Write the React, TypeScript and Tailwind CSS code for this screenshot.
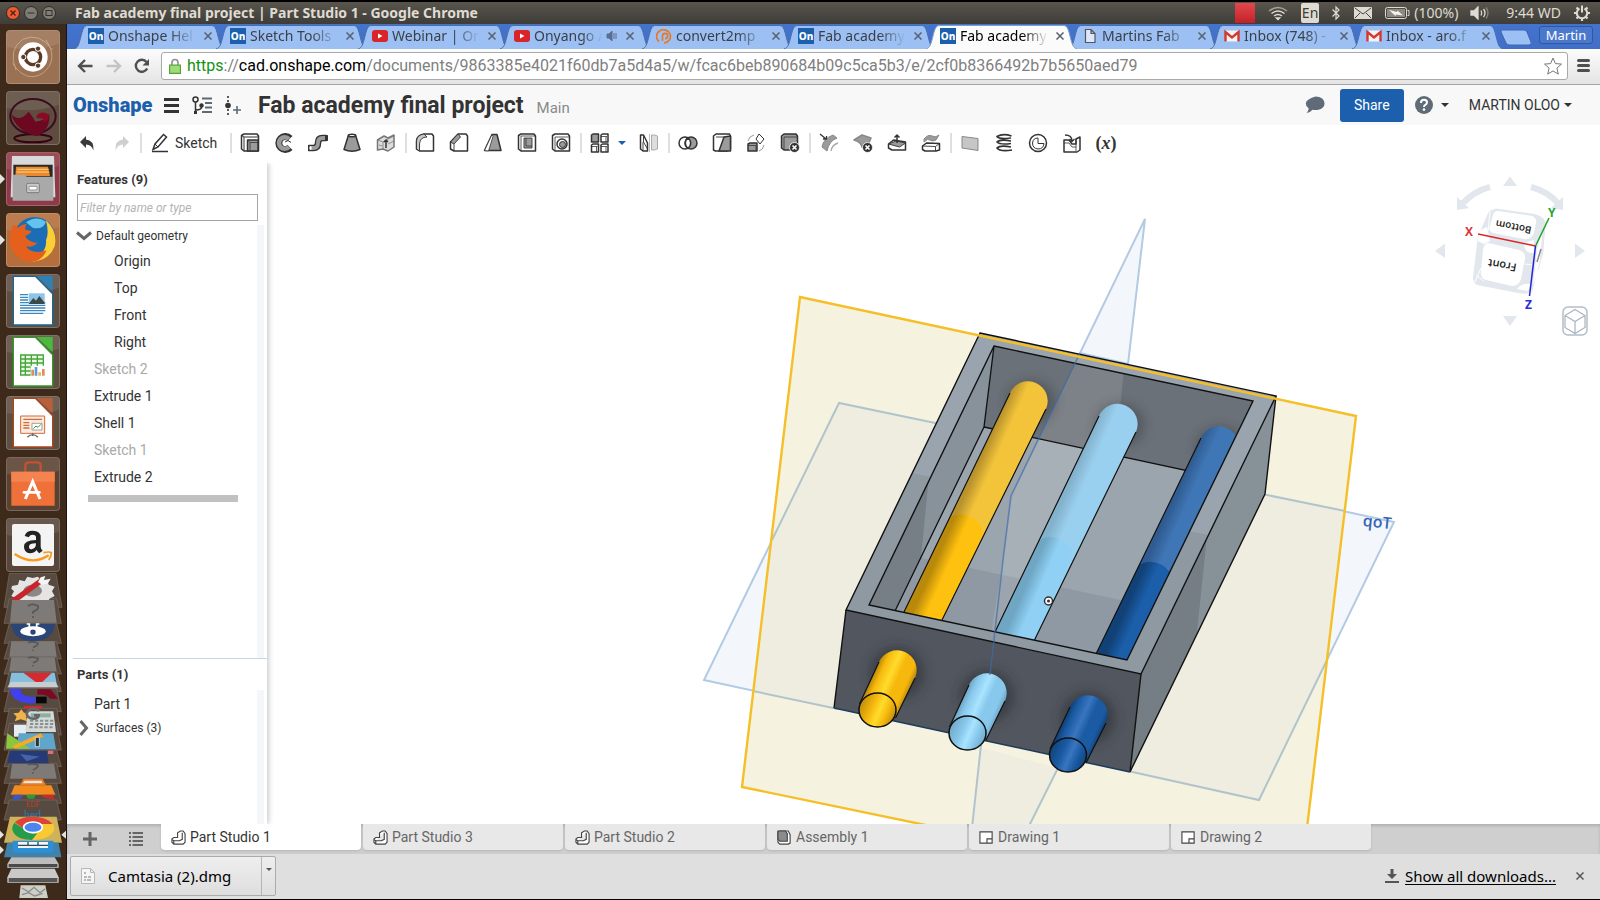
import type { ReactNode } from "react";

const INK = "#333333";
const GREY = "#9b9b9b";

// ---------- chrome tabs ----------

type Favicon = "on" | "youtube" | "convert" | "page" | "gmail";

const chromeTabs: { title: string; icon: Favicon; active?: boolean; sound?: boolean }[] = [
  { title: "Onshape Hel", icon: "on" },
  { title: "Sketch Tools", icon: "on" },
  { title: "Webinar | On", icon: "youtube" },
  { title: "Onyango A", icon: "youtube", sound: true },
  { title: "convert2mp", icon: "convert" },
  { title: "Fab academy", icon: "on" },
  { title: "Fab academy", icon: "on", active: true },
  { title: "Martins Fab", icon: "page" },
  { title: "Inbox (748) -", icon: "gmail" },
  { title: "Inbox - aro.f", icon: "gmail" },
];

function TabFavicon({ icon }: { icon: Favicon }) {
  if (icon === "on") {
    return (
      <span className="flex h-4 w-4 flex-none items-center justify-center bg-[#1b5fad] text-[10px] leading-4 font-extrabold text-white">
        On
      </span>
    );
  }
  return (
    <svg viewBox="0 0 16 16" className="h-4 w-4 flex-none">
      {icon === "youtube" && (
        <>
          <rect x="0" y="2" width="16" height="12" rx="3" fill="#d9252a" />
          <path d="M6 5.5v5l4.5-2.5z" fill="#fff" />
        </>
      )}
      {icon === "convert" && (
        <g fill="none" stroke="#e87722" strokeWidth="1.6">
          <path d="M3 13.500A7 6.600 0 1 1 8 15" />
          <path d="M6.500 13V8a2.600 2.600 0 1 1 2.600 2.600" />
        </g>
      )}
      {icon === "page" && (
        <path d="M3.500 1.500h5.500l4 4v9h-9.500zM9 1.500v4h4" fill="#dce8fa" stroke="#555" strokeWidth="1.2" />
      )}
      {icon === "gmail" && (
        <>
          <rect x="1" y="2.500" width="14" height="11" fill="#f3f3f3" />
          <path d="M1.500 13.500V4L8 9.500 14.500 4v9.500" fill="none" stroke="#d5372c" strokeWidth="2.400" />
        </>
      )}
    </svg>
  );
}

function ChromeTab({ tab }: { tab: (typeof chromeTabs)[number] }) {
  return (
    <div className={tab.active ? "relative z-10 h-[25px] max-w-[142px] flex-1" : "relative h-[25px] max-w-[142px] flex-1"}>
      <svg viewBox="0 0 152 25" preserveAspectRatio="none" className="absolute -left-px top-0 h-[25px] w-[152px]">
        <path
          d="M0 25C4 24 5 20 7 12C9 4 10 1.500 14 1.500H137C141 1.500 142 4 144 12C146 20 147 24 151 25"
          fill={tab.active ? "#fbfbfb" : "#9cc0f3"}
          stroke={tab.active ? "#7d9cd0" : "#4a6ea9"}
        />
      </svg>
      <div className="relative flex h-6 items-center pl-[13px]">
        <TabFavicon icon={tab.icon} />
        <span
          className={
            tab.active
              ? "ml-1 w-[88px] text-[14px] leading-5 whitespace-nowrap text-black [mask-image:linear-gradient(to_right,black_70%,transparent)]"
              : tab.sound
                ? "ml-1 w-[68px] text-[14px] leading-5 whitespace-nowrap text-[#3b3f48] [mask-image:linear-gradient(to_right,black_70%,transparent)]"
                : "ml-1 w-[88px] text-[14px] leading-5 whitespace-nowrap text-[#3b3f48] [mask-image:linear-gradient(to_right,black_70%,transparent)]"
          }
        >
          {tab.title}
        </span>
        {tab.sound && (
          <svg viewBox="0 0 12 12" className="ml-1 h-3 w-3 flex-none" fill="none" stroke="#5b6f90">
            <path d="M1 4h2l3-3v10L3 8H1z" fill="#5b6f90" />
            <path d="M8 3v6M10 3v6" />
          </svg>
        )}
        <button aria-label="Close tab" className="ml-1 flex h-4 w-4 flex-none items-center justify-center">
          <svg viewBox="0 0 8 8" className="h-2 w-2">
            <path d="M0.500 0.500l7 7M7.500 0.500l-7 7" stroke="#56606f" strokeWidth="1.500" />
          </svg>
        </button>
      </div>
    </div>
  );
}

// ---------- ubuntu top bar ----------

function TopBar() {
  return (
    <header className="flex h-6 items-center border-t-2 border-black bg-linear-to-b from-[#59554d] to-[#3e3d38] pr-[9px] pl-[6px] text-[#dfdbd2]">
      <svg viewBox="0 0 50 14" className="h-[14px] w-[50px] flex-none">
        <circle cx="7" cy="7" r="6.500" fill="#ee5a31" stroke="#2e2c28" />
        <path d="M4.500 4.500l5 5M9.500 4.500l-5 5" stroke="#45200f" strokeWidth="1.200" />
        <circle cx="25" cy="7" r="6.500" fill="#807d75" stroke="#2e2c28" />
        <path d="M21.500 7h7" stroke="#33312d" />
        <circle cx="43" cy="7" r="6.500" fill="#807d75" stroke="#2e2c28" />
        <rect x="40" y="4.500" width="6" height="5" fill="none" stroke="#33312d" />
      </svg>
      <h1 className="ml-[19px] flex-1 text-[14px] leading-5 font-bold whitespace-nowrap">
        Fab academy final project | Part Studio 1 - Google Chrome
      </h1>
      <div className="flex items-center text-[14px] leading-5 whitespace-nowrap">
        <span className="h-5 w-5 bg-linear-to-b from-[#e2474b] to-[#c41f28]" />
        <svg viewBox="0 0 20 16" className="ml-[13px] h-4 w-5" fill="none" stroke="#dfdbd2" strokeWidth="1.500">
          <path d="M1 6q9-7 18 0" opacity=".6" />
          <path d="M3.500 8.500q6.500-5 13 0M6 11q4-3 8 0" />
          <path d="M8.500 13l1.500 1.500 1.500-1.500z" fill="#dfdbd2" />
        </svg>
        <span className="ml-[13px] rounded-xs bg-[#dfdbd2] px-px text-[14px] leading-5 text-[#3e3d38]">En</span>
        <svg viewBox="0 0 10 16" className="ml-3 h-4 w-[10px]" fill="none" stroke="#dfdbd2" strokeWidth="1.200">
          <path d="M1.500 4.500l6.500 6.500L5 14V2l3 3-6.500 6.500" />
        </svg>
        <svg viewBox="0 0 18 12" className="ml-[13px] h-3 w-[18px]">
          <rect width="18" height="12" rx="1" fill="#dfdbd2" />
          <path d="M1 1l8 6 8-6M1 11l5-5M17 11l-5-5" fill="none" stroke="#45433e" />
        </svg>
        <svg viewBox="0 0 25 12" className="ml-[13px] h-3 w-[25px]">
          <rect x="0.500" y="0.500" width="21" height="11" rx="2" fill="none" stroke="#dfdbd2" />
          <rect x="2" y="2" width="18" height="8" fill="#8d8a83" />
          <path d="M22.500 3.500h1.500v5h-1.500" fill="none" stroke="#dfdbd2" />
          <path d="M4 3l8 2 .5-1.500L18 8.500l-7-1-.5 1.500z" fill="#f5f2ec" />
        </svg>
        <span className="ml-1">(100%)</span>
        <svg viewBox="0 0 20 14" className="ml-3 h-[14px] w-5" fill="none" stroke="#dfdbd2" strokeWidth="1.300">
          <path d="M1 5h3l4-4v12L4 9H1z" fill="#dfdbd2" />
          <path d="M11 4.500q1.500 2.500 0 5M13.500 3q3 4 0 8" />
          <path d="M16 1.500q4 5.500 0 11" opacity=".4" />
        </svg>
        <span className="ml-4">9:44 WD</span>
        <svg viewBox="0 0 18 18" className="ml-3 h-[18px] w-[18px]" fill="none" stroke="#dfdbd2">
          <path d="M6.500 4.500a5.200 5.200 0 1 0 5 0M9 1.500v7" strokeWidth="2" />
          <path d="M1 9h2.500M14.500 9h2.500M3.500 14.500l1.800-1.800M14.500 14.500l-1.800-1.800M3.500 3.500l1.800 1.800M14.500 3.500l-1.800 1.800M9 14.500v2.500" strokeWidth="2.200" />
        </svg>
      </div>
    </header>
  );
}

// ---------- launcher ----------

const launcherItems: { name: string; tile: string; running?: boolean; art: ReactNode }[] = [
  {
    name: "Dash",
    tile: "bg-[#9a7152]",
    art: (
      <>
        <g fill="none" stroke="#dcc2ac" strokeWidth="3" opacity=".6">
          <path d="M30 120Q5 60 50 28Q100 5 140 60" />
          <path d="M120 30Q160 90 110 130Q60 160 20 100" />
        </g>
        <circle cx="81" cy="81" r="44" fill="#fff" />
        <circle cx="81" cy="81" r="23" fill="none" stroke="#5b3a28" strokeWidth="10" />
        <g fill="#5b3a28" stroke="#fff" strokeWidth="3">
          <circle cx="52" cy="81" r="8" />
          <circle cx="96" cy="56" r="8" />
          <circle cx="96" cy="107" r="8" />
        </g>
      </>
    ),
  },
  {
    name: "Blender",
    tile: "bg-[#5e4c3f]",
    art: (
      <>
        <ellipse cx="81" cy="142" rx="56" ry="12" fill="none" stroke="#380016" strokeWidth="6" />
        <ellipse cx="81" cy="76" rx="68" ry="52" fill="none" stroke="#3a0c20" strokeWidth="6" />
        <path d="M16 70Q40 96 68 62Q84 82 88 92Q112 92 130 70Q134 116 92 136Q30 120 16 70z" fill="#6c0820" />
        <path d="M92 74Q104 58 128 70Q132 92 110 94Q124 80 92 82z" fill="#8a0a26" />
      </>
    ),
  },
  {
    name: "Files",
    tile: "bg-[#8e3a48]",
    running: true,
    art: (
      <>
        <path d="M18 12h126l4 124H14z" fill="#d9d9d9" />
        <path d="M22 38h118v40H22z" fill="#2d2925" />
        <path d="M30 44h96l6 28H28z" fill="#e88a2c" />
        <path d="M34 52h94M32 60h98" stroke="#ffd08a" strokeWidth="3" />
        <path d="M20 68h36l6 6h80v72H20z" fill="#a9a9a9" />
        <rect x="62" y="94" width="38" height="28" rx="4" fill="#c9c9c9" stroke="#7c7c7c" strokeWidth="3" />
        <rect x="69" y="103" width="24" height="11" rx="3" fill="#fff" stroke="#666" strokeWidth="2" />
      </>
    ),
  },
  {
    name: "Firefox",
    tile: "bg-[#b46f3c]",
    running: true,
    art: (
      <>
        <circle cx="86" cy="74" r="62" fill="#1c6db5" />
        <path d="M60 28Q90 6 120 26Q110 52 80 44z" fill="#63c3ec" />
        <path d="M120 22Q156 56 146 100Q130 142 80 146Q124 116 120 82Q130 60 120 22z" fill="#fbcf33" />
        <path d="M20 38Q30 34 36 44Q46 34 62 32Q56 42 58 50L76 54Q74 64 58 68Q60 84 94 90Q80 104 60 100Q76 126 122 112Q106 148 72 146Q18 138 12 88Q12 56 20 38z" fill="#e6601d" />
      </>
    ),
  },
  {
    name: "LibreOffice Writer",
    tile: "bg-[#5f4f43]",
    art: (
      <>
        <path d="M22 7h66l52 52v94H22z" fill="#fff" stroke="#1b6693" strokeWidth="4" />
        <path d="M92 6h48v46z" fill="#2f80b4" />
        <path d="M42 62h24M42 70h24M42 78h24M42 86h76M42 94h76M42 102h76M42 110h76M42 118h70" stroke="#3a88bd" strokeWidth="4" />
        <rect x="68" y="58" width="48" height="32" fill="#8cc4ea" />
        <path d="M68 90l14-18 8 8 10-14 16 20v4z" fill="#3a4a48" />
      </>
    ),
  },
  {
    name: "LibreOffice Calc",
    tile: "bg-[#5f4f43]",
    art: (
      <>
        <path d="M22 7h66l52 52v94H22z" fill="#fff" stroke="#2f9a26" strokeWidth="4" />
        <path d="M92 6h48v46z" fill="#4bb93c" />
        <path d="M44 60h68v60H44zM44 72h68M44 84h68M44 96h68M44 108h68M58 60v60M76 60v60M94 60v60" fill="#eaf7e4" stroke="#46a53a" strokeWidth="4" />
        <path d="M74 92h44v32H74z" fill="#fff" />
        <path d="M80 122v-18M112 122v-20" stroke="#e58b62" strokeWidth="8" />
        <path d="M90 122v-26" stroke="#5f9fd0" strokeWidth="8" />
        <path d="M101 122v-10" stroke="#f0b35a" strokeWidth="8" />
      </>
    ),
  },
  {
    name: "LibreOffice Impress",
    tile: "bg-[#5f4f43]",
    art: (
      <>
        <path d="M22 7h66l52 52v94H22z" fill="#fff" stroke="#a8471d" strokeWidth="4" />
        <path d="M92 6h48v46z" fill="#b9603a" />
        <path d="M44 60h72v52H44z" fill="#fdeadc" stroke="#d06b3a" strokeWidth="3" />
        <path d="M52 70h56M52 80h18M52 88h18M52 96h18" stroke="#d06b3a" strokeWidth="4" />
        <path d="M78 82h30v20H78z" fill="#fff" stroke="#777" strokeWidth="2" />
        <path d="M82 98l8-8 6 4 9-9" fill="none" stroke="#3a9a3a" strokeWidth="3" />
        <path d="M64 124q16-16 32 0M80 112v8" fill="none" stroke="#666" strokeWidth="4" />
      </>
    ),
  },
  {
    name: "Ubuntu Software",
    tile: "bg-[#5a4232]",
    art: (
      <>
        <path d="M58 52V26q0-10 10-10h26q10 0 10 10v26" fill="none" stroke="#c45131" strokeWidth="7" />
        <path d="M16 44h130v102H16z" fill="#f0703a" />
        <path d="M16 44h130v30H16z" fill="#f58350" />
        <path d="M58 126l22-52 22 52" fill="none" stroke="#fff" strokeWidth="9" />
        <path d="M54 106h46" stroke="#fff" strokeWidth="8" strokeLinecap="round" />
      </>
    ),
  },
  {
    name: "Amazon",
    tile: "bg-[#574639]",
    art: (
      <>
        <rect x="18" y="18" width="126" height="126" rx="6" fill="#f4f4f4" />
        <path
          d="M56 54Q60 38 80 38Q104 38 104 58V86Q104 92 110 98L100 106Q94 102 92 96Q84 106 72 106Q54 104 54 86Q54 66 90 66V58Q90 50 80 50Q70 50 69 58zM90 76Q69 76 69 86Q69 94 77 94Q90 92 90 76z"
          fill="#222"
          fillRule="evenodd"
        />
        <path d="M26 108Q80 144 128 112" fill="none" stroke="#f79a1f" strokeWidth="7" />
        <path d="M112 104q20-4 24 0q0 12-8 22" fill="none" stroke="#f79a1f" strokeWidth="5" />
      </>
    ),
  },
];

// Folded part of the launcher, tiles lying nearly flat on each other
function LauncherStack() {
  return (
    <svg viewBox="0 369 198 975" preserveAspectRatio="xMinYMin slice" className="h-[325px] w-[66px] flex-none">
      <g fill="#574a40" stroke="#7b6d61" strokeWidth="2">
        <path d="M28 370h140l18 102H12z" />
        <path d="M28 446h142l14 74H12z" />
        <path d="M28 520h142l14 60H12z" />
        <path d="M28 575h142l14 52H12z" />
        <path d="M28 622h142l14 50H12z" />
        <path d="M28 665h142l14 60H12z" />
        <path d="M28 715h142l14 70H12z" />
        <path d="M28 775h142l14 80H12z" />
        <path d="M28 820h142l14 80H12z" />
        <path d="M28 900h142l14 50H12z" />
        <path d="M28 940h142l14 60H12z" />
        <path d="M28 1000h142l14 60H12z" />
        <path d="M28 1050h142l14 60H12z" />
      </g>
      <path d="M36 408l18-4 4-14 16 4 8-14 16 4 16-4 10 14 18-4 4 14 18 6-8 14 8 14-16 8-4 14H54l-4-14-16-8 8-14-8-8z" fill="#e4e4e4" />
      <ellipse cx="98" cy="422" rx="28" ry="18" fill="#8c8783" />
      <path d="M44 450L124 392" stroke="#c5252b" strokeWidth="16" strokeLinecap="round" />
      <path d="M114 396l8-14 14-4-4 12 20-4-8 14-18 4z" fill="#f4f4f4" />
      <g fill="#7d7a77">
        <path d="M36 450h126l8 68H30z" />
        <path d="M34 574h130l6 46H28z" />
        <path d="M34 622h130l6 42H28z" />
        <path d="M36 942h126l8 44H30z" />
      </g>
      <g fill="none" stroke="#5a5754" strokeWidth="5">
        <path d="M84 468q14-10 30 0q4 10-15 17v6M99 498v6" />
        <path d="M84 578q14-6 30 2q0 8-15 12M99 599v4" />
        <path d="M84 624q14-6 30 2q0 8-15 12M99 645v4" />
        <path d="M84 944q14-6 30 2q0 8-15 14M99 967v4" />
      </g>
      <path d="M34 522h130q-4 50-66 52Q38 570 34 522z" fill="#2b4577" />
      <ellipse cx="99" cy="544" rx="38" ry="15" fill="#fff" />
      <circle cx="99" cy="546" r="8" fill="#2b4577" />
      <path d="M80 522h8v14h22v-14h8" fill="none" stroke="#fff" strokeWidth="5" />
      <path d="M34 668h130l8 44H26z" fill="#86bfdc" />
      <path d="M70 668h86l-38 36z" fill="#d52a2e" />
      <path d="M32 696h134l10 16H22z" fill="#c9ccd0" />
      <path d="M28 716h34q-2 26 44 24v20Q36 762 28 716z" fill="#4040ee" />
      <path d="M112 718h40l22 28h-24q-8-14-38-12z" fill="#7c0824" />
      <path d="M108 740h32v20h-32z" fill="#090909" />
      <path d="M72 768h54v8H72z" fill="#d62a2a" />
      <path d="M40 790l16-2 8-10 8 10 20 2-14 10 4 14-20-6-18 6 6-14z" fill="#f0b44a" />
      <path d="M42 824h36v36H42z" fill="#e6ecef" />
      <path d="M84 784h76l8 62H76z" fill="#d5dad9" />
      <path d="M92 790h60v12H92z" fill="#8bb09d" />
      <path d="M90 812h70M90 822h72M88 832h74" stroke="#8a9290" strokeWidth="6" strokeDasharray="10 5" />
      <path d="M116 784q-2-8-16-8t-20 14q2 16 20 16q16 0 16-10h-14" fill="none" stroke="#666" strokeWidth="8" />
      <path d="M56 850h104l8 48H50z" fill="#5fa5cc" />
      <path d="M22 850l70 46H18z" fill="#8cc63c" />
      <path d="M38 888l84-38 8 10-84 36z" fill="#f5ab22" />
      <path d="M106 862h12v28h-12z" fill="#24343e" stroke="#fff" strokeWidth="2" />
      <path d="M30 902h110l6 38H22z" fill="#263a78" />
      <path d="M60 912l60 8-40 14z" fill="#5774b8" opacity=".7" />
      <path d="M144 902h16v10h-16z" fill="#d9717b" />
      <path d="M70 986h58l10 20H60z" fill="#ee7a1c" />
      <path d="M74 992h50l4 8H68z" fill="#e7e7e7" />
      <path d="M44 1006h110l12 28H32z" fill="#f38a1e" />
      <path d="M40 1034h30q-4 14-30 16z" fill="#3b56c7" />
      <path d="M78 1034h30l-6 12H84z" fill="#2b9a3d" />
      <path d="M124 1034h36l4 16-36-8z" fill="#c22d2d" />
      <text x="98" y="1070" textAnchor="middle" fontSize="22" fill="#b94033" fontFamily="Liberation Serif, serif">EDF</text>
      <text x="98" y="1106" textAnchor="middle" fontSize="36" fill="#267bbd" fontFamily="Liberation Serif, serif">hed</text>
      <path d="M30 1100h140l16 78H12z" fill="#ceb25c" />
      <ellipse cx="99" cy="1135" rx="64" ry="35" fill="#f7c933" />
      <path d="M44 1117Q60 1100 99 1100Q140 1100 158 1122H99Q80 1122 74 1138z" fill="#dc4437" />
      <path d="M43 1118Q24 1144 60 1164Q76 1170 96 1170L112 1150Q88 1154 74 1138z" fill="#259b4b" />
      <ellipse cx="99" cy="1132" rx="28" ry="16" fill="#4a86ee" stroke="#fff" strokeWidth="5" />
      <path d="M22 1178h154l8 44H12z" fill="#3f82ac" />
      <path d="M38 1172h122v30q-2 6-10 6H48q-8 0-10-6z" fill="#2d8fd6" />
      <path d="M54 1176h90v18H54z" fill="#f2f4f6" />
      <path d="M84 1176v8M114 1176v8M54 1186h90" stroke="#2a4b66" strokeWidth="4" />
      <path d="M34 1222h130l12 20v12H22v-12z" fill="#bcbcbc" />
      <path d="M26 1242h146v10H26z" fill="#4a4a4a" />
      <path d="M34 1256h130l12 26v16H22v-16z" fill="#c9c9c9" />
      <path d="M26 1284h146v12H26z" fill="#555" />
      <path d="M62 1306h74l8 38H58z" fill="#cfcfca" />
      <path d="M66 1314l20 12 16-14 18 16 16-12M66 1334l20-6 18 10 24-8" fill="none" stroke="#8c8c86" strokeWidth="4" />
      <path d="M0 1142l12 12-12 12zM0 1188l12 12-12 12zM198 1142l-14 12 14 12z" fill="#e6e3de" />
    </svg>
  );
}

function Launcher() {
  return (
    <nav className="flex w-[67px] flex-none flex-col items-center overflow-hidden border-r border-[#1b1410] bg-[#3e2a1b] pt-[6px]">
      {launcherItems.map((item) => (
        <button key={item.name} aria-label={item.name} className="relative mb-[7px] flex h-[54px] w-full flex-none justify-center">
          <span className={`${item.tile} h-[54px] w-[54px] overflow-hidden rounded-[4px] border border-white/20`}>
            <svg viewBox="0 0 162 162" className="-m-px h-[54px] w-[54px]">
              <path d="M0 0h162v40Q80 70 0 50z" fill="#fff" opacity=".1" />
              {item.art}
            </svg>
          </span>
          {item.running && <span className="absolute top-[22px] left-0 border-y-[5px] border-l-[5px] border-y-transparent border-l-[#e6e3de]" />}
        </button>
      ))}
      <div className="-mt-[7px] w-[66px] pt-px">
        <LauncherStack />
      </div>
    </nav>
  );
}

// ---------- browser chrome ----------

function Browser() {
  return (
    <div className="flex-none">
      <div className="flex h-[25px] bg-linear-to-b from-[#4373cd] to-[#426fc6] pl-[8px]">
        <div className="flex flex-1">
          {chromeTabs.map((tab, i) => (
            <ChromeTab key={i} tab={tab} />
          ))}
          <button aria-label="New tab" className="ml-1 h-[25px] w-[34px]">
            <svg viewBox="0 0 34 25" className="h-[25px] w-[34px]">
              <path d="M3 6h22q2 0 3 2l4 10q1 3-2 3H10q-2 0-3-2L2 8q0-2 1-2z" fill="#9cc0f3" stroke="#3c66b3" />
            </svg>
          </button>
        </div>
        <button className="mt-[2px] mr-[7px] h-[18px] w-[54px] rounded-[3px] border border-[#2e57a8] bg-[#4a78cd] text-[13px] leading-4 text-white">
          Martin
        </button>
      </div>
      <div className="flex h-9 items-center border-b border-[#a6a6a6] bg-linear-to-b from-[#fcfcfc] to-[#e4e4e4] pb-[2px]">
        <button aria-label="Back" className="ml-[10px]">
          <svg viewBox="0 0 16 14" className="h-[14px] w-4" fill="none" stroke="#4f4f4f" strokeWidth="2.400">
            <path d="M15.500 7H2.500M8 1L2 7l6 6" />
          </svg>
        </button>
        <button aria-label="Forward" className="ml-[13px]">
          <svg viewBox="0 0 16 14" className="h-[14px] w-4" fill="none" stroke="#c3c3c3" strokeWidth="2.400">
            <path d="M0.500 7h13M8 1l6 6-6 6" />
          </svg>
        </button>
        <button aria-label="Reload" className="ml-3">
          <svg viewBox="0 0 16 16" className="h-4 w-4" fill="none" stroke="#4f4f4f" strokeWidth="2.400">
            <path d="M13.200 10.500A6 6 0 1 1 12.500 4" />
            <path d="M15 1v6.500H8.500z" fill="#4f4f4f" stroke="none" />
          </svg>
        </button>
        <div className="ml-[11px] flex h-7 flex-1 items-center rounded-[3px] border border-[#a9a9a9] bg-white pr-[5px] pl-[7px]">
          <svg viewBox="0 0 12 16" className="h-4 w-3 flex-none">
            <path d="M3 7V4.500a3 3 0 0 1 6 0V7" fill="none" stroke="#8f8f8f" strokeWidth="1.600" />
            <rect x="0.500" y="7" width="11" height="8.500" fill="#85cf5d" stroke="#5c9e3c" />
            <path d="M1.500 9h9M1.500 11h9M1.500 13h9" stroke="#b7e79b" />
          </svg>
          <span className="ml-[6px] flex-1 overflow-hidden font-['Roboto',sans-serif] text-[16px] leading-6 whitespace-nowrap text-[#808080]">
            <span className="text-[#129212]">https</span>://<span className="text-black">cad.onshape.com</span>
            /documents/9863385e4021f60db7a5d4a5/w/fcac6beb890684b09c5ca5b3/e/2cf0b8366492b7b5650aed79
          </span>
          <button aria-label="Bookmark this page">
            <svg viewBox="0 0 18 18" className="h-[18px] w-[18px]" fill="#fff" stroke="#777">
              <path d="M9 1l2.400 5.600 6.100.5-4.600 4 1.400 6L9 13.900l-5.300 3.200 1.400-6-4.600-4 6.100-.5z" />
            </svg>
          </button>
        </div>
        <button aria-label="Chrome menu" className="mr-[10px] ml-[9px] flex w-[13px] flex-col gap-[2px]">
          <span className="h-[3px] rounded-xs bg-[#4f4f4f]" />
          <span className="h-[3px] rounded-xs bg-[#4f4f4f]" />
          <span className="h-[3px] rounded-xs bg-[#4f4f4f]" />
        </button>
      </div>
    </div>
  );
}

// ---------- onshape header ----------

function Caret({ className }: { className: string }) {
  return (
    <svg viewBox="0 0 8 4" className={className}>
      <path d="M0 0h8L4 4z" fill="currentColor" />
    </svg>
  );
}

function DocumentHeader() {
  return (
    <div className="flex h-10 flex-none items-center bg-[#f8f8f8] pl-[6px] text-[#333]">
      <a href="/" className="w-20 flex-none text-[20px] leading-6 font-black text-[#1b5fad]">
        Onshape
      </a>
      <button aria-label="Menu" className="ml-[11px] flex w-[15px] flex-col gap-[3px]">
        <span className="h-[3px] bg-[#333]" />
        <span className="h-[3px] bg-[#333]" />
        <span className="h-[3px] bg-[#333]" />
      </button>
      <button aria-label="Versions" className="ml-[13px]">
        <svg viewBox="0 0 20 19" className="h-[19px] w-5" fill="none" stroke="#333" strokeWidth="1.500">
          <circle cx="3.500" cy="3.500" r="2.500" />
          <path d="M3.500 6v12M3.500 14Q9.500 14 9.500 11" />
          <circle cx="9.500" cy="9.500" r="1.500" fill="#333" />
          <path d="M2 16.500h3" strokeWidth="3" />
          <path d="M10 2.500h10M13 7h7M13 11.500h7M10 16h10" stroke="#5d6a75" strokeWidth="2" />
        </svg>
      </button>
      <button aria-label="Create version" className="ml-3">
        <svg viewBox="0 0 18 19" className="h-[19px] w-[18px]" fill="none" stroke="#333">
          <path d="M4 0v6M4 13v6" strokeWidth="1.600" strokeDasharray="2 2" />
          <circle cx="4" cy="9.500" r="2.800" fill="#333" stroke="none" />
          <path d="M9 14h8M13 10v8" stroke="#5d6a75" strokeWidth="1.600" />
        </svg>
      </button>
      <h2 className="ml-4 pt-[2px] text-[23px] leading-7 font-bold whitespace-nowrap">Fab academy final project</h2>
      <span className="ml-[13px] pt-[6px] text-[15px] leading-5 text-[#8a8a8a]">Main</span>
      <div className="flex flex-1 items-center justify-end pr-7">
        <button aria-label="Comments">
          <svg viewBox="0 0 20 18" className="h-[18px] w-5">
            <path d="M10.500 0.500C16 .5 19.500 3.500 19.500 7.500S16 14 10.500 14q-1.500 0-3-.3Q5 16.800 1.500 17q2-2 2.200-4.600Q.8 10.500.8 7.500.8 3.500 10.500.5z" fill="#5f6b76" />
          </svg>
        </button>
        <button className="ml-[15px] h-[33px] w-[64px] rounded-[3px] bg-[#1b5fad] text-[14px] leading-5 text-white">Share</button>
        <button aria-label="Help" className="ml-[11px] flex items-center gap-2">
          <svg viewBox="0 0 18 18" className="h-[18px] w-[18px]">
            <circle cx="9" cy="9" r="9" fill="#5f6b76" />
            <path d="M6 7q0-3.200 3-3.200t3 2.700q0 1.500-1.700 2.400Q9 9.600 9 11" fill="none" stroke="#fff" strokeWidth="2" />
            <circle cx="9" cy="13.600" r="1.300" fill="#fff" />
          </svg>
          <Caret className="h-1 w-2" />
        </button>
        <button className="ml-5 flex items-center gap-1 text-[14px] leading-5 whitespace-nowrap">
          MARTIN OLOO
          <Caret className="h-1 w-2" />
        </button>
      </div>
    </div>
  );
}

// ---------- feature toolbar ----------

const outlineBox = <path d="M1.500 2.500L4 1h13l1.500 2v15H4l-2.500-2z" fill="#fff" />;
const deleteBadge = (
  <>
    <circle cx="14.500" cy="14.500" r="5" fill="#333" stroke="#fff" strokeWidth=".8" />
    <path d="M12.500 12.500l4 4M16.500 12.500l-4 4" stroke="#fff" strokeWidth="1.600" />
  </>
);

const toolGroups: { name: string; dropdown?: boolean; art: ReactNode }[][] = [
  [
    { name: "Extrude", art: <>{outlineBox}<path d="M4 4h14M4 4v14M1.500 2.500L4 4" strokeWidth="1" /><path d="M7.500 7h10.500v11H7.500z" fill={GREY} /><path d="M7.500 7l2.500 2.500h8M10 9.500V18" strokeWidth=".8" /></> },
    { name: "Revolve", art: <><path d="M16 5.500A6.500 6.500 0 1 0 16 14.500" strokeWidth="7" /><path d="M15 6A5.800 5.800 0 1 0 15 14" stroke={GREY} strokeWidth="4.500" /><path d="M11 9l3-1.500 3 2" strokeWidth="1" /></> },
    { name: "Sweep", art: <><path d="M1.500 15h4q4.500 0 4.500-5t4.500-5H18" strokeWidth="6.500" strokeLinecap="round" /><path d="M2.500 15h3q4.500 0 4.500-5t4.500-5H17" stroke={GREY} strokeWidth="3.800" /><ellipse cx="2.500" cy="15" rx="1.200" ry="2" fill="#fff" stroke="none" /></> },
    { name: "Loft", art: <><path d="M6.500 2L2 16.500Q10 20 18 16.500L13.500 2z" fill={GREY} /><ellipse cx="10" cy="2.500" rx="3.500" ry="1.300" fill="#fff" /></> },
    { name: "Thicken", art: <><path d="M1.500 7L8 3l4 2 6-3v12l-6 4-5-2-5.500 1z" fill="#ddd" stroke="#777" /><path d="M1.500 7l5.500 2 5-3 6-3M7 9v8M12 11l6-3M3 12l3 1" stroke="#777" strokeWidth=".8" /><path d="M10 7v8M8 9l2-2 2 2" /></> },
  ],
  [
    { name: "Fillet", art: <><path d="M1.500 8Q2 2 9 1h8l1.500 2v15H5l-3.500-2z" fill="#fff" /><path d="M1.500 8Q2 2 9 1l3 3Q5 4 4.500 11V18L1.500 16z" fill="#c8c8c8" strokeWidth=".9" /></> },
    { name: "Chamfer", art: <><path d="M1.500 9L9 1h8l1.500 2v15H5l-3.500-2z" fill="#fff" /><path d="M1.500 9L9 1l2.500 3L5 11z" fill={GREY} strokeWidth=".9" /><path d="M5 11v7" strokeWidth=".9" /></> },
    { name: "Draft", art: <><path d="M1.500 17.500L9 1.500h5l4 16z" fill={GREY} /><path d="M1.500 17.500L9 1.500l1 2L5.500 18z" fill="#fff" strokeWidth=".8" /></> },
    { name: "Shell", art: <>{outlineBox}<path d="M4 3v15M4 3h14" strokeWidth=".8" /><path d="M7 5h8v10H7z" fill={GREY} strokeWidth=".9" /><path d="M9 5v8h6" strokeWidth=".8" /></> },
    { name: "Hole", art: <>{outlineBox}<path d="M4 4v14M4 4h14" strokeWidth=".8" /><circle cx="11" cy="11" r="5" fill="#fff" /><circle cx="11.500" cy="11.500" r="3" fill={GREY} strokeWidth="1" /></> },
  ],
  [
    { name: "Linear pattern", dropdown: true, art: <><path d="M1.500 2l1.500-1h5.500v8H1.500z" fill={GREY} /><path d="M11 2l1.500-1H18v8h-7zM1.500 12L3 11h5.500v8H1.500zM11 12l1.500-1H18v8h-7z" fill="#fff" /><path d="M11 3.500h6M1.500 13.500h6M11 13.500h6M6.500 14v5M16 14v5M16 4v5" strokeWidth=".8" /></> },
    { name: "Mirror", art: <><path d="M18.500 3l-3-1h-3v15h3l3-1z" fill="#ddd" stroke="#aaa" strokeWidth="1" /><path d="M1.500 2h3l4 8v8H4l-2.500-2z" fill="#fff" /><path d="M4.500 2v7l4 7M4 9v9" strokeWidth=".9" /><path d="M10.500 1v18" stroke="#aaa" strokeWidth=".8" /></> },
  ],
  [
    { name: "Boolean", art: <><circle cx="7" cy="10" r="6" fill="#fff" /><circle cx="13" cy="10" r="6" fill={GREY} /><path d="M10 5a6 6 0 0 1 0 10a6 6 0 0 1 0-10z" fill="#fff" /></> },
    { name: "Split", art: <><path d="M1.500 3L4 1h13.500l1 2v13l-3 2h-12l-2-1z" fill="#fff" /><path d="M12 4L18.500 3v15H7z" fill={GREY} /><path d="M4 4h8" strokeWidth=".9" /></> },
    { name: "Transform", art: <><path d="M2 11l2-1h7v8H2z" fill={GREY} /><path d="M2 12.500h8M10 12.500V18" strokeWidth=".8" /><path d="M13 1l5 5-4 5-4-5z" fill="#fff" strokeWidth="1" /><path d="M2 8Q3 3 8 2M18 12q-1 5-5 6" stroke="#999" strokeWidth="1" /></> },
    { name: "Delete part", art: <><path d="M1.500 3L4 1h12l1.500 2v14H4l-2.500-2z" fill={GREY} /><path d="M4 4h13M4 4v13" strokeWidth=".8" />{deleteBadge}</> },
  ],
  [
    { name: "Modify fillet", art: <><path d="M3 14Q4 6 14 2l4 3Q10 8 8 18z" fill={GREY} stroke="#888" strokeWidth="1" /><path d="M12 18q1-6 7-8" stroke="#aaa" /><path d="M1 1l6 5M4 6h3.500V3" strokeWidth="1.300" /></> },
    { name: "Delete face", art: <><path d="M1 7l8-5 9 3-3 7-6 2Q8 9 1 7z" fill={GREY} stroke="#888" />{deleteBadge}</> },
    { name: "Move face", art: <><path d="M1.500 11l5-4 12 2v8H5l-3.500-2z" fill="#fff" /><path d="M1.500 11L9 8l9.500 2-6 4z" fill={GREY} strokeWidth=".9" /><path d="M10 10V2M7.500 4.500L10 2l2.500 2.500" /></> },
    { name: "Replace face", art: <><path d="M3 6q4-5 8-3t7-1l-3 5q-4 2-6 0t-6 2z" fill={GREY} stroke="#888" strokeWidth="1" /><path d="M1.500 13l4-3 13 .5V17L15 18H4l-2.500-1.500z" fill="#fff" /><path d="M1.500 13l13 .5 4-3M14.500 13.500V18" strokeWidth=".9" /></> },
  ],
  [
    { name: "Plane", art: <path d="M2 3.500l16 2v12l-16-2.500z" fill="#c6c6c6" stroke="#888" strokeWidth="1" /> },
    { name: "Helix", art: <path d="M17.500 3Q9 0 3 3.500q2 3 14 1.500M17 8Q6 6 3 9q3 3 14 1.500M17 14Q6 12 3 15q3 4 15 2" strokeWidth="1.700" /> },
    { name: "Composite curve", art: <><circle cx="10" cy="10" r="8.500" /><path d="M10 5v5.500h6Q15.500 16 10 16Q4.500 15.500 4.500 10Q5 5 10 5z" strokeWidth="1" /></> },
    { name: "Derived", art: <><path d="M2 7h5l3 4h4V6l4-2v13l-3 2H2z" fill="#fff" /><path d="M14 6v12M2 10h5l3 4h4" strokeWidth=".8" /><path d="M3 2q7 0 7 6M7.500 6L10 8.500 12.500 6" strokeWidth="1.300" /></> },
  ],
];

function Divider() {
  return <span className="mx-px h-5 w-[3px] flex-none border-r-2 border-[#dfdfdf]" />;
}

function FeatureToolbar() {
  return (
    <div className="flex h-[38px] flex-none items-center bg-white pb-[2px] pl-[3px] text-[#333]">
      <button aria-label="Undo" className="flex w-[34px] justify-center">
        <svg viewBox="0 0 15 15" className="h-[15px] w-[15px]">
          <path d="M6 0v3.500q8 .5 7.500 11Q11.500 8.500 6 8.500V12L0 6z" fill="#3b3b3b" />
        </svg>
      </button>
      <button aria-label="Redo" disabled className="flex w-[34px] justify-center">
        <svg viewBox="0 0 15 15" className="h-[15px] w-[15px]">
          <path d="M9 0v3.500Q1 4 1.500 14.500Q3.500 8.500 9 8.500V12l6-6z" fill="#cfcfcf" />
        </svg>
      </button>
      <Divider />
      <button className="flex w-[85px] items-center gap-[6px] pl-2 text-[14px] leading-5">
        <svg viewBox="0 0 18 20" className="h-5 w-[18px]" fill="none" stroke={INK} strokeWidth="1.500">
          <path d="M2 16.500L4 11 12.500 1.500l3 2.500L7 14z" />
          <path d="M4 11l3 3" strokeWidth="1" />
          <path d="M1 18.500h16" />
        </svg>
        Sketch
      </button>
      {toolGroups.map((group, i) => (
        <div key={i} className="flex items-center">
          <Divider />
          {group.map((tool) => (
            <button key={tool.name} aria-label={tool.name} className="flex h-8 items-center">
              <span className="flex w-[34px] justify-center">
                <svg viewBox="0 0 20 20" className="h-5 w-5" fill="none" stroke={INK} strokeWidth="1.500" strokeLinejoin="round">
                  {tool.art}
                </svg>
              </span>
              {tool.dropdown && <Caret className="mr-[6px] ml-px h-1 w-2 text-[#1b5fad]" />}
            </button>
          ))}
        </div>
      ))}
      <button className="w-[34px] font-['Liberation_Serif',serif] text-[18px] leading-5 font-bold">
        (<i>x</i>)
      </button>
    </div>
  );
}

// ---------- feature list ----------

const features = [
  { name: "Sketch 2", hidden: true },
  { name: "Extrude 1" },
  { name: "Shell 1" },
  { name: "Sketch 1", hidden: true },
  { name: "Extrude 2" },
];

function FeaturePanel() {
  return (
    <aside className="relative z-10 flex w-[200px] flex-none flex-col bg-white text-[#333] shadow-[2px_0_5px_rgba(0,0,0,0.2)]">
      <section className="flex min-h-0 flex-1 flex-col pt-[5px]">
        <label htmlFor="feature-filter" className="pl-[10px] text-[13px] leading-6 font-bold">
          Features (9)
        </label>
        <input
          id="feature-filter"
          placeholder="Filter by name or type"
          className="mt-[2px] ml-[10px] h-[27px] w-[181px] border border-[#a5a5a5] px-[2px] text-[12px] italic placeholder:text-[#b4b4b4]"
        />
        <div className="mt-1 mr-[3px] flex-1 border-r-[7px] border-[#f5f6f9]">
          <button className="flex h-[22px] items-center gap-1 pl-[9px] text-[12px] leading-5">
            <svg viewBox="0 0 16 10" className="h-[10px] w-4" fill="none" stroke="#666" strokeWidth="3">
              <path d="M1 1.500l7 6 7-6" />
            </svg>
            Default geometry
          </button>
          <ul className="pt-px text-[14px] leading-[27px]">
            {["Origin", "Top", "Front", "Right"].map((name) => (
              <li key={name} className="pl-[47px]">
                {name}
              </li>
            ))}
            {features.map((feature) => (
              <li key={feature.name} className={feature.hidden ? "pl-[27px] text-[#a9a9a9]" : "pl-[27px]"}>
                {feature.name}
              </li>
            ))}
          </ul>
          <div className="mt-1 ml-[21px] h-[7px] w-[150px] bg-[#c1c1c1]" />
        </div>
      </section>
      <section className="ml-[6px] flex h-[166px] flex-none flex-col border-t border-[#c9d6e2] pt-1">
        <h3 className="pl-1 text-[13px] leading-6 font-bold">Parts (1)</h3>
        <div className="mt-[3px] mr-[3px] flex-1 border-r-[7px] border-[#f5f6f9]">
          <p className="pt-px pl-[21px] text-[14px] leading-[27px]">Part 1</p>
          <button className="flex h-5 items-center gap-[7px] pl-[6px] text-[12px] leading-5">
            <svg viewBox="0 0 10 16" className="h-4 w-[10px]" fill="none" stroke="#666" strokeWidth="3">
              <path d="M1.500 1l6 7-6 7" />
            </svg>
            Surfaces (3)
          </button>
        </div>
      </section>
    </aside>
  );
}

// ---------- 3d viewport ----------

type Pt = [number, number];

const pipes: { id: string; tl: Pt; tr: Pt; br: Pt; bl: Pt; midL: Pt; midR: Pt; stubL: Pt; stubR: Pt; cap: Pt }[] = [
  { id: "yellow", tl: [1010, 393], tr: [1046, 409], bl: [904, 612], br: [942, 620], midL: [950, 517], midR: [983, 534], stubL: [879, 662], stubR: [915, 678], cap: [877.500, 710] },
  { id: "sky", tl: [1099, 416], tr: [1136, 432], bl: [995, 632], br: [1034, 641], midL: [1040, 540], midR: [1073, 556], stubL: [969, 685], stubR: [1005, 701], cap: [967.500, 733] },
  { id: "navy", tl: [1201, 438], tr: [1237, 454], bl: [1096, 654], br: [1135, 662], midL: [1139, 565], midR: [1173, 582], stubL: [1070, 707], stubR: [1106, 723], cap: [1068, 755] },
];

const pipeColors: Record<string, { dark: string; mid: string; light: string; far: string; farDark: string; shine: string }> = {
  yellow: { dark: "#b8890a", mid: "#f7b80d", light: "#ffc10f", far: "#f3c43a", farDark: "#b8922c", shine: "#ffdc2c" },
  sky: { dark: "#6fa6c4", mid: "#88c8ec", light: "#8fd0f4", far: "#9ad0ef", farDark: "#83b2cc", shine: "#a9e4ff" },
  navy: { dark: "#114176", mid: "#1a5ba4", light: "#1b5fab", far: "#3f76b5", farDark: "#2f5b90", shine: "#3a75c0" },
};

function Pipe({ pipe }: { pipe: (typeof pipes)[number] }) {
  const { id, tl, tr, br, bl, midL, midR } = pipe;
  const c = pipeColors[id];
  return (
    <g>
      <linearGradient id={`${id}-far`} gradientUnits="userSpaceOnUse" x1={tl[0]} y1={tl[1]} x2={tr[0]} y2={tr[1]}>
        <stop offset="0" stopColor={c.farDark} />
        <stop offset=".35" stopColor={c.far} />
        <stop offset="1" stopColor={c.far} />
      </linearGradient>
      <linearGradient id={`${id}-near`} gradientUnits="userSpaceOnUse" x1={tl[0]} y1={tl[1]} x2={tr[0]} y2={tr[1]}>
        <stop offset="0" stopColor={c.dark} />
        <stop offset=".35" stopColor={c.light} />
        <stop offset="1" stopColor={c.light} />
      </linearGradient>
      <path d={`M${bl} L${tl} A19 19 0 0 1 ${tr} L${br}Z`} fill={`url(#${id}-far)`} />
      <path d={`M${bl} L${midL} A21 18 24 0 1 ${midR} L${br}Z`} fill={`url(#${id}-near)`} />
      <path d={`M${bl} L${tl} M${tr} L${br}`} stroke="#111" strokeWidth="1.200" />
    </g>
  );
}

function PipeStub({ pipe }: { pipe: (typeof pipes)[number] }) {
  const { id, stubL, stubR, cap } = pipe;
  const c = pipeColors[id];
  const capL: Pt = [cap[0] - 18, cap[1] - 6];
  const capR: Pt = [cap[0] + 18, cap[1] + 8];
  return (
    <g>
      <linearGradient id={`${id}-stub`} gradientUnits="userSpaceOnUse" x1={stubL[0]} y1={stubL[1]} x2={stubR[0]} y2={stubR[1]}>
        <stop offset="0" stopColor={c.dark} />
        <stop offset=".15" stopColor={c.mid} />
        <stop offset=".4" stopColor={c.shine} />
        <stop offset=".6" stopColor={c.mid} />
        <stop offset=".85" stopColor={c.mid} />
        <stop offset="1" stopColor={c.dark} />
      </linearGradient>
      <linearGradient id={`${id}-cap`} x1="0" y1=".3" x2="1" y2=".7">
        <stop offset="0" stopColor={c.dark} />
        <stop offset=".35" stopColor={c.mid} />
        <stop offset=".55" stopColor={c.shine} />
        <stop offset=".75" stopColor={c.mid} />
        <stop offset="1" stopColor={c.dark} />
      </linearGradient>
      <ellipse cx={(stubL[0] + stubR[0]) / 2} cy={(stubL[1] + stubR[1]) / 2 + 3} rx="27" ry="26" fill="#24262a" opacity=".5" filter="url(#soft)" />
      <path d={`M${capL} L${stubL} A19 19 0 0 1 ${stubR} L${capR}Z`} fill={`url(#${id}-stub)`} />
      <path d={`M${capL} L${stubL} M${stubR} L${capR}`} stroke="#111" strokeWidth="1.200" />
      <ellipse cx={cap[0]} cy={cap[1]} rx="18.500" ry="17" fill={`url(#${id}-cap)`} stroke="#111" strokeWidth="1.500" />
    </g>
  );
}

function Model() {
  return (
    <svg viewBox="267 163 1333 661" preserveAspectRatio="xMidYMid slice" className="absolute inset-0 h-full w-full">
      <defs>
        <clipPath id="cavity">
          <path d="M994 346L1253 401L1127 660L869 605Z" />
        </clipPath>
        <filter id="soft" x="-50%" y="-50%" width="200%" height="200%">
          <feGaussianBlur stdDeviation="6" />
        </filter>
      </defs>

      {/* reference planes */}
      <g stroke="#b3cae4" strokeWidth="2" fill="#f3f7fb">
        <path d="M1145 219L1080 353L1128 364Z" />
        <path d="M839 403L1394 522L1259 800L704 680Z" />
      </g>
      <path d="M800 297L1356 416L1307 828L940 828L742 787Z" fill="#f6f2e0" />
      <path d="M839 403L1345 511L1327 660L1259 800L753 691L772 540Z" fill="#efede0" />
      <path d="M981 748L972 828L1028 828L1058 768Z" fill="#efede0" />
      <path d="M772 540L839 403L940 424M1262 494L1345 511M1327 660L1259 800L1128 771M838 709L753 691M981 745L972 828M1028 828L1058 768" fill="none" stroke="#b0c4cc" strokeWidth="2" />

      {/* box */}
      <path d="M1276 396L1265 494L1130 772L1141 674Z" fill="#869298" />
      <path d="M1207 536L1197 632L1130 772L1141 674Z" fill="#757d85" />
      <path d="M980 333L1276 396L1141 674L846 610Z" fill="#9aa4af" />
      <path d="M912 473L1208 535L1141 674L846 610Z" fill="#8f99a2" />
      <g clipPath="url(#cavity)">
        <path d="M994 346L1253 401L1127 660L869 605Z" fill="#9ba5ae" />
        <path d="M994 346L1270 401L1240 481L984 427Z" fill="#6b7178" />
        <path d="M994 346L984 427L890 620L869 605Z" fill="#87929a" />
        <path d="M929 475L921 558L890 620L860 620Z" fill="#767e86" />
        <path d="M921 558L970 568L1121 600L1160 610L1127 670L890 620Z" fill="#8f99a3" />
        <path d="M1078 358L1124 368L1116 450L1055 580L990 640L1003 560L1011 496Z" fill="#fff" opacity=".12" />
        <g fill="#24262a" opacity=".35" filter="url(#soft)">
          <ellipse cx="1031" cy="402" rx="24" ry="21" />
          <ellipse cx="1120" cy="425" rx="24" ry="21" />
          <ellipse cx="1220" cy="448" rx="24" ry="21" />
        </g>
        <path d="M994 346L984 427L895 611M984 427L1240 482" fill="none" stroke="#111" strokeWidth="1.300" />
        {pipes.map((pipe) => (
          <Pipe key={pipe.id} pipe={pipe} />
        ))}
      </g>
      <path d="M846 610L1141 674L1130 772L834 708Z" fill="#52565e" />
      <g fill="none" stroke="#111" strokeWidth="1.400">
        <path d="M980 333L1276 396L1141 674L846 610Z" />
        <path d="M994 346L1253 401L1127 660L869 605Z" />
        <path d="M846 610L834 708M1130 772L1141 674M1276 396L1265 494L1130 772" />
      </g>
      <path d="M834 708L1130 772" stroke="#1d3b5c" strokeWidth="1.500" />
      {pipes.map((pipe) => (
        <PipeStub key={pipe.id} pipe={pipe} />
      ))}
      <path d="M1080 353L1011 496L1003 560L990 675" fill="none" stroke="#3a6cab" strokeWidth="1.600" opacity=".65" />

      {/* selected plane outline */}
      <path d="M940 828L742 787L800 297L1356 416L1307 828" fill="none" stroke="#f5bf28" strokeWidth="2.400" />

      <circle cx="1048.500" cy="601" r="4" fill="#fff" stroke="#333" strokeWidth="1.500" />
      <circle cx="1048.500" cy="601" r="1.500" fill="#333" />
      <text transform="translate(1391 529) rotate(6) scale(-1 1)" fontSize="16" fontWeight="600" fill="#3565b4" fontFamily="Open Sans, sans-serif">
        Top
      </text>
    </svg>
  );
}

function ViewCube() {
  return (
    <div className="absolute top-[7px] right-0 h-[180px] w-[180px]">
      <svg viewBox="1420 170 180 180" className="h-[180px] w-[180px]">
        <g fill="#e1e7ed">
          <path d="M1503 186L1510 176.500L1517 186zM1503 316L1510 326L1517 316zM1445 243.500L1435 251L1445 258zM1575 243.500L1585 251L1575 258z" />
          <path d="M1490 187Q1474 191 1462 204M1531 187Q1547 191 1559 204" fill="none" stroke="#e1e7ed" strokeWidth="6" />
          <path d="M1457 197V210L1469 208zM1563 197V210L1551 208z" />
          <path d="M1496 208.500L1535 214Q1545 217 1546 224L1543 250L1532 292Q1526 295 1518 293L1477 285Q1473 282 1473 277L1478 236L1489 211z" />
        </g>
        <path d="M1498 211L1532 216Q1537 218 1536 223L1534 233Q1531 240 1524 239L1493 233Q1488 231 1490 226L1493 215Q1494 211 1498 211z" fill="#fff" />
        <path d="M1488 243L1519 250Q1526 252 1525 259L1521 279Q1519 286 1512 286L1486 280Q1480 278 1481 271L1483 250Q1484 243 1488 243z" fill="#fff" />
        <path d="M1479 231l8-4 3 14-6 3-6-3zM1524 243l10-3v13q-10 1-10-10zM1517 289q4-6 14-5l-3 7zM1537 249l6-22-4 42-6 16z" fill="#fff" />
        <path d="M1475 282l6-14M1476 275l8 6M1490 211l-2 20M1525 264l8 1" stroke="#fff" />
        <path d="M1543 222v30l-5 18" fill="none" stroke="#e1e7ed" />
        <path d="M1541 249l-4 13" stroke="#888" strokeWidth="1.500" />
        <path d="M1478 234L1535.500 246" stroke="#d92626" strokeWidth="1.500" />
        <path d="M1535.500 246L1549 218" stroke="#1fa02a" strokeWidth="1.500" />
        <path d="M1535.500 246L1529.500 296" stroke="#2424d8" strokeWidth="1.500" />
        <g fontFamily="Open Sans, sans-serif" fontSize="12" fontWeight="700">
          <text x="1465" y="236" fill="#d8343c">X</text>
          <text x="1548" y="217" fill="#28a432">Y</text>
          <text x="1525" y="309" fill="#2a2ad6">Z</text>
          <text transform="translate(1532 227) rotate(191)" fontSize="10" fontWeight="600" fill="#222">Bottom</text>
          <text transform="translate(1517 264) rotate(190)" fontSize="11" fontWeight="600" fill="#222">Front</text>
        </g>
        <rect x="1563" y="307" width="24" height="28" rx="5" fill="#fff" stroke="#b3bdc8" strokeWidth="1.500" />
        <path d="M1575 309.500l10 6v12l-10 6-10-6v-12zM1565 315.500l10 6 10-6M1575 321.500v12" fill="none" stroke="#a8b3bf" strokeWidth="1.200" />
      </svg>
    </div>
  );
}

// ---------- bottom bars ----------

const studioTabs = [
  { name: "Part Studio 1", kind: "part", active: true },
  { name: "Part Studio 3", kind: "part" },
  { name: "Part Studio 2", kind: "part" },
  { name: "Assembly 1", kind: "assembly" },
  { name: "Drawing 1", kind: "drawing" },
  { name: "Drawing 2", kind: "drawing" },
];

function StudioTabs() {
  return (
    <div className="flex h-[30px] flex-none bg-[#cfcfcf] shadow-[inset_0_2px_3px_rgba(0,0,0,0.15)]">
      <button aria-label="Insert tab" className="flex w-[46px] items-center justify-center">
        <svg viewBox="0 0 14 14" className="h-[14px] w-[14px]" stroke="#666" strokeWidth="3">
          <path d="M7 0v14M0 7h14" />
        </svg>
      </button>
      <button aria-label="Tab list" className="flex w-[46px] items-center justify-center">
        <svg viewBox="0 0 14 14" className="h-[14px] w-[14px]" stroke="#666" strokeWidth="2">
          <path d="M0 1h2M0 5h2M0 9h2M0 13h2M3.500 1H14M3.500 5H14M3.500 9H14M3.500 13H14" />
        </svg>
      </button>
      <div className="ml-[2px] flex flex-1 gap-[2px]">
        {studioTabs.map((tab) => (
          <button
            key={tab.name}
            className={
              tab.active
                ? "flex h-[26px] max-w-[200px] flex-1 items-center gap-1 rounded-b-[4px] bg-white pl-[10px] text-[14px] leading-5 text-[#333] shadow-sm"
                : "flex h-[26px] max-w-[200px] flex-1 items-center gap-1 rounded-b-[4px] bg-[#e8e8e8] pl-[10px] text-[14px] leading-5 text-[#666] shadow-sm"
            }
          >
            <svg viewBox="0 0 16 16" className="h-[15px] w-[15px]" fill="#fff" stroke="#444" strokeWidth="1.200">
              {tab.kind === "part" && <path d="M1 9.500l2-1.500h4V3l3-2h3l2 3v9l-2 2H3l-2-2zM3 11.500h6l3-1.500V3M3 15v-3.500L1 10" />}
              {tab.kind === "assembly" && (
                <>
                  <path d="M1 2l2-1h9l2 4v9l-2 1H3l-2-2z" />
                  <path d="M1 1h8l2 3v8H3L1 10z" fill="#8b8b8b" />
                </>
              )}
              {tab.kind === "drawing" && <path d="M1 2h13v12H1zM8.500 9.500H14V14H8.500z" />}
            </svg>
            {tab.name}
          </button>
        ))}
      </div>
    </div>
  );
}

function DownloadShelf() {
  return (
    <div className="flex h-[46px] flex-none items-center border-b border-black bg-[#dfdfdf] pr-4 pb-px pl-[3px] text-[15px] leading-5 text-black">
      <div className="flex h-10 w-[206px] rounded-xs border border-[#ababab] bg-linear-to-b from-[#eeeeee] to-[#dedede]">
        <button className="flex flex-1 items-center pl-[10px]">
          <svg viewBox="0 0 14 16" className="h-4 w-[14px]" fill="#f5f5f5" stroke="#b8b8b8">
            <path d="M0.500 0.500h9l4 4v11h-13zM9.500 .5v4h4" />
            <path d="M3 5h2M3 9h3M7 9h3M3 12h2M6 12h4" strokeWidth="2" />
          </svg>
          <span className="ml-[13px] text-[15px] leading-5">Camtasia (2).dmg</span>
        </button>
        <button aria-label="Download options" className="flex w-[14px] justify-center border-l border-[#b5b5b5] pt-[11px] text-[#555]">
          <Caret className="h-[3px] w-[6px]" />
        </button>
      </div>
      <div className="flex flex-1 items-center justify-end">
        <svg viewBox="0 0 14 14" className="h-[14px] w-[14px]">
          <path d="M5.500 0h3v5H12L7 10 2 5h3.500z" fill="#555" />
          <path d="M0 13h14" stroke="#555" strokeWidth="2" />
        </svg>
        <a href="#downloads" className="ml-[6px] underline underline-offset-2">
          Show all downloads...
        </a>
        <button aria-label="Close downloads" className="ml-5">
          <svg viewBox="0 0 8 8" className="h-2 w-2">
            <path d="M0.500 0.500l7 7M7.500 0.500l-7 7" stroke="#555" strokeWidth="1.500" />
          </svg>
        </button>
      </div>
    </div>
  );
}

export default function App() {
  return (
    <div className="flex h-screen flex-col overflow-hidden bg-white font-['Noto_Sans',sans-serif]">
      <TopBar />
      <div className="flex min-h-0 flex-1">
        <Launcher />
        <div className="flex min-w-0 flex-1 flex-col">
          <Browser />
          <main className="flex min-h-0 flex-1 flex-col font-['Roboto',sans-serif]">
            <DocumentHeader />
            <FeatureToolbar />
            <div className="flex min-h-0 flex-1 overflow-hidden">
              <FeaturePanel />
              <div className="relative flex-1 overflow-hidden bg-white">
                <Model />
                <ViewCube />
              </div>
            </div>
            <StudioTabs />
          </main>
          <DownloadShelf />
        </div>
      </div>
    </div>
  );
}
